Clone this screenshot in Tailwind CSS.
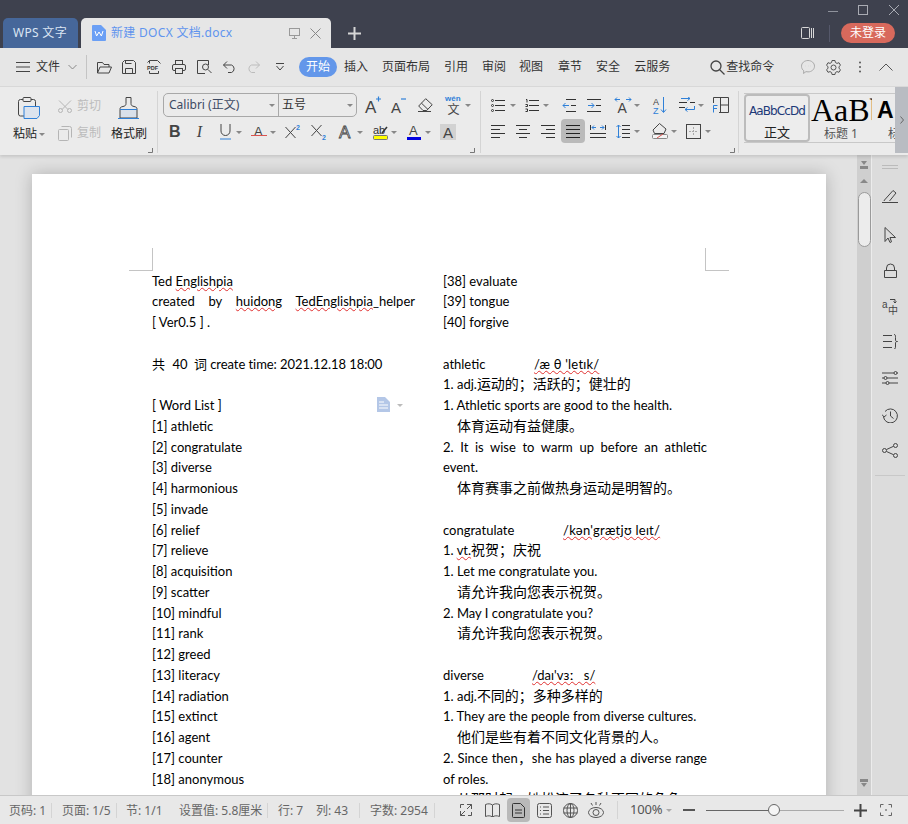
<!DOCTYPE html>
<html lang="zh">
<head>
<meta charset="utf-8">
<script src="https://cdn.jsdelivr.net/npm/@tailwindcss/browser@4"></script>
</head>
<body class="m-0">
<div class="w-[908px] h-[824px] overflow-hidden flex flex-col bg-[#e6e6e6] text-[#333] text-[12px] font-['Noto_Sans','Noto_Sans_CJK_SC',sans-serif]">

  <!-- title bar -->
  <header class="h-[48px] shrink-0 bg-[#3e414e] flex items-end relative">
    <div class="ml-[3px] w-[75px] h-[30px] bg-[#46679a] rounded-t-[5px] flex items-center pl-[10px] text-[#dbe5f3] text-[12px] tracking-[.3px]">WPS 文字</div>
    <div class="ml-[3px] w-[250px] h-[30px] bg-[#e6e6e6] rounded-t-[5px] flex items-center">
      <svg class="ml-[11px]" width="14" height="16" viewBox="0 0 14 16"><path d="M1 0h8l5 5v10a1 1 0 0 1-1 1H1a1 1 0 0 1-1-1V1a1 1 0 0 1 1-1z" fill="#6a9ff5"/><path d="M3 6l1.600 5L7 7l2.400 4L11 6" fill="none" stroke="#fff"/></svg>
      <span class="ml-[5px] w-[122px] text-[#5f94ee] whitespace-nowrap tracking-[.3px]">新建 DOCX 文档.docx</span>
      <svg class="ml-[56px]" width="11" height="11" viewBox="0 0 11 11" fill="none" stroke="#999"><rect x=".5" y=".5" width="10" height="7"/><path d="M5.500 8v2.500M3 10.500h5"/></svg>
      <svg class="ml-[10px]" width="11" height="11" viewBox="0 0 11 11" fill="none" stroke="#888"><path d="M.5.5l10 10M10.500.5l-10 10"/></svg>
    </div>
    <svg class="ml-[17px] mb-[8px]" width="13" height="13" viewBox="0 0 13 13" stroke="#d6d6d6" stroke-width="2"><path d="M6.500 0v13M0 6.500h13"/></svg>
    <div class="absolute right-[9px] top-[5px] flex items-center">
      <svg width="10" height="10" viewBox="0 0 10 10" fill="none" stroke="#8f929c"><path d="M0 6.500h10"/></svg>
      <svg class="ml-[20px]" width="10" height="10" viewBox="0 0 10 10" fill="none" stroke="#a9abb3"><rect x=".5" y=".5" width="9" height="9"/></svg>
      <svg class="ml-[21px]" width="10" height="10" viewBox="0 0 10 10" fill="none" stroke="#a9abb3"><path d="M0 0l10 10M10 0L0 10"/></svg>
    </div>
    <div class="absolute right-[13px] top-[23px] flex items-center">
      <svg width="13" height="12" viewBox="0 0 13 12" fill="none" stroke="#d8d8d8"><rect x=".5" y=".5" width="8" height="11" rx="1"/><path d="M10.500 1v10M12.500 1v10"/></svg>
      <span class="ml-[15px] w-px h-[17px] bg-[#55586a]"></span>
      <span class="ml-[11px] w-[54px] h-[20px] rounded-full bg-[#d8695c] text-white flex items-center justify-center text-[12px]">未登录</span>
    </div>
  </header>

  <!-- menu row -->
  <nav class="h-[39px] shrink-0 flex items-center border-b border-[#d9d9d9] bg-[#e6e6e6] text-[#333] whitespace-nowrap">
    <svg class="ml-[16px]" width="14" height="10" viewBox="0 0 14 10" stroke="#444"><path d="M0 .5h14M0 5h14M0 9.500h14"/></svg>
    <span class="ml-[6px]">文件</span>
    <svg class="ml-[8px]" width="9" height="6" viewBox="0 0 9 6" fill="none" stroke="#888"><path d="M.5 1l4 4 4-4"/></svg>
    <span class="ml-[9px] w-px h-[24px] bg-[#c4c4c4]"></span>
    <svg class="ml-[10px]" width="15" height="13" viewBox="0 0 15 13" fill="none" stroke="#444"><path d="M.5 12V1.500h5l1.500 2h5V6M.5 12l2.500-6h11.500L12 12z"/></svg>
    <svg class="ml-[10px]" width="14" height="14" viewBox="0 0 14 14" fill="none" stroke="#444"><path d="M.5 2.500l2-2h9l2 2v11H.5zM3.500 13.500V8.500h7v5M3.500.5v3h6"/></svg>
    <svg class="ml-[11px] overflow-visible" width="14" height="14" viewBox="0 0 14 14" fill="none" stroke="#444"><path d="M2.500 3.500V.5h8l3 3M2.500 11v2.500h9V11M2.500.5l-2 2"/><text x="0" y="9.500" font-size="5.500" font-weight="700" fill="#333" stroke="none" font-family="Liberation Sans">PDF</text></svg>
    <svg class="ml-[11px]" width="14" height="14" viewBox="0 0 14 14" fill="none" stroke="#444"><rect x="3.500" y=".5" width="7" height="4"/><rect x=".5" y="4.500" width="13" height="6" rx="1.500"/><rect x="3.500" y="8.500" width="7" height="5" fill="#e6e6e6"/></svg>
    <svg class="ml-[11px]" width="15" height="14" viewBox="0 0 15 14" fill="none" stroke="#444"><path d="M8 13.500H.5V.5h11V5"/><circle cx="8.500" cy="7" r="3"/><path d="M11 9.500l3.500 3.500"/></svg>
    <svg class="ml-[11px]" width="13" height="12" viewBox="0 0 13 12" fill="none" stroke="#444"><path d="M4 .5L.5 4 4 7.500M.5 4h8a4 4 0 0 1 0 7.500H5"/></svg>
    <svg class="ml-[11px]" width="13" height="12" viewBox="0 0 13 12" fill="none" stroke="#bcbcbc"><path d="M9 .5L12.500 4 9 7.500M12.500 4h-8a4 4 0 0 0 0 7.500H8"/></svg>
    <svg class="ml-[16px]" width="8" height="8" viewBox="0 0 8 8" fill="none" stroke="#444"><path d="M0 .5h8M.5 3l3.500 4 3.500-4"/></svg>
    <span class="ml-[15px] w-[38px] h-[20px] rounded-full bg-[#6397ea] text-white flex items-center justify-center">开始</span>
    <span class="ml-[7px]">插入</span><span class="ml-[14px]">页面布局</span><span class="ml-[14px]">引用</span><span class="ml-[14px]">审阅</span><span class="ml-[13px]">视图</span><span class="ml-[15px]">章节</span><span class="ml-[14px]">安全</span><span class="ml-[14px]">云服务</span>
    <svg class="ml-[40px]" width="15" height="15" viewBox="0 0 15 15" fill="none" stroke="#444" stroke-width="1.300"><circle cx="6" cy="6" r="5"/><path d="M9.500 9.500l5 5"/></svg>
    <span class="ml-[1px]">查找命令</span>
    <svg class="ml-[27px]" width="14" height="14" viewBox="0 0 14 14" fill="none" stroke="#aaa"><path d="M7 .5c3.600 0 6.500 2.500 6.500 5.700s-2.900 5.700-6.500 5.700c-.7 0-1.400-.1-2-.3L2.500 13.500l.3-2.700C1.400 9.800.5 8.100.5 6.200.5 3 3.400.5 7 .5z"/><path d="M4.500 6h.1M7 6h.1M9.500 6h.1" stroke-width="1.500"/></svg>
    <svg class="ml-[11px]" width="15" height="15" viewBox="0 0 15 15" fill="none" stroke="#555"><path d="M6 .5h3l.4 2 1.600.9 2-.7 1.500 2.600-1.500 1.300v1.800l1.500 1.300-1.500 2.600-2-.7-1.600.9-.4 2H6l-.4-2-1.600-.9-2 .7L.5 9.700 2 8.400V6.600L.5 5.300 2 2.700l2 .7 1.600-.9z"/><circle cx="7.500" cy="7.500" r="2.500"/></svg>
    <svg class="ml-[17px]" width="4" height="12" viewBox="0 0 4 12" fill="#555"><circle cx="2" cy="1.500" r="1"/><circle cx="2" cy="6" r="1"/><circle cx="2" cy="10.500" r="1"/></svg>
    <svg class="ml-[17px]" width="14" height="8" viewBox="0 0 14 8" fill="none" stroke="#555"><path d="M.5 7.500L7 1l6.500 6.500"/></svg>
  </nav>

  <!-- ribbon -->
  <section class="h-[68px] shrink-0 flex bg-[#ebebeb] relative shadow-[0_2px_3px_rgba(0,0,0,.12)] z-10">
    <!-- clipboard -->
    <div class="w-[157px] shrink-0 flex relative pt-[10px] whitespace-nowrap">
      <div class="ml-[13px] w-[30px] flex flex-col items-start">
        <svg class="ml-[5px]" width="22" height="22" viewBox="0 0 22 22" fill="none" stroke="#444"><path d="M5 2.500H2.500a2 2 0 0 0-2 2V17a2 2 0 0 0 2 2H6"/><path d="M13 2.500h2.500a2 2 0 0 1 2 2V9"/><rect x="5" y=".5" width="8" height="4" rx="1"/><path d="M6 9.500h15.500v9l-2.500 3H6z" fill="#dbe3ee" stroke="#2f80d8"/></svg>
        <div class="mt-[6px] flex items-center text-[#222]">粘贴<i class="ml-[2px] w-0 h-0 border-x-[3px] border-x-transparent border-t-[3px] border-t-[#888]"></i></div>
      </div>
      <div class="ml-[15px] w-[45px] flex flex-col text-[#bcbcbc]">
        <div class="flex items-center h-[18px]"><svg width="14" height="13" viewBox="0 0 14 13" fill="none" stroke="#b5b5b5"><path d="M1 .5l9 9M13 .5l-9 9"/><circle cx="2.500" cy="10.500" r="2"/><circle cx="11.500" cy="10.500" r="2"/></svg><span class="ml-[5px]">剪切</span></div>
        <div class="flex items-center h-[18px] mt-[9px]"><svg width="14" height="15" viewBox="0 0 14 15" fill="none" stroke="#b5b5b5"><rect x=".5" y="3.500" width="10" height="11" rx="1"/><path d="M3.500 .5h8a2 2 0 0 1 2 2v9"/></svg><span class="ml-[5px]">复制</span></div>
      </div>
      <div class="ml-[8px] w-[36px] flex flex-col items-start">
        <svg class="ml-[7px]" width="21" height="22" viewBox="0 0 21 22" fill="none" stroke="#444"><path d="M8 .5h5v6c0 2 1 2.500 3 3 2.500.5 3 1 3 3H2c0-2 .5-2.500 3-3 2-.5 3-1 3-3z"/><path d="M2 12.500h17v8.500H2z" fill="#d9e0ea"/><path d="M0 21.500h21M2 12.500h17" stroke="#2f80d8"/></svg>
        <div class="mt-[6px] text-[#222]">格式刷</div>
      </div>
      <svg class="absolute left-[148px] top-[61px]" width="5" height="5" viewBox="0 0 5 5" fill="none" stroke="#777"><path d="M4.500 0v4.500H0"/></svg>
    </div>
    <span class="w-px h-[62px] mt-[4px] bg-[#d4d4d4] shrink-0"></span>

    <!-- font -->
    <div class="w-[322px] shrink-0 flex flex-col relative">
      <div class="flex items-center mt-[6px] h-[24px]">
        <div class="ml-[5px] w-[194px] h-[24px] border border-[#a8a8a8] rounded-[5px] flex items-stretch">
          <div class="w-[115px] flex items-center pl-[5px] border-r border-[#a8a8a8] text-[#3d4a63]">Calibri (正文)<i class="ml-auto mr-[3px] w-0 h-0 border-x-[3px] border-x-transparent border-t-[3px] border-t-[#888]"></i></div>
          <div class="flex-1 flex items-center pl-[3px] text-[#333]">五号<i class="ml-auto mr-[3px] w-0 h-0 border-x-[3px] border-x-transparent border-t-[3px] border-t-[#888]"></i></div>
        </div>
        <svg class="ml-[8px] overflow-visible" width="16" height="18" viewBox="0 0 16 18"><text x="0" y="17" font-size="17" fill="#444" font-family="Liberation Sans">A</text><path d="M11 3h5M13.500.5v5" stroke="#2f80d8" stroke-width="1.200"/></svg>
        <svg class="ml-[10px] overflow-visible" width="15" height="18" viewBox="0 0 15 18"><text x="0" y="17" font-size="15" fill="#444" font-family="Liberation Sans">A</text><path d="M10 3h5" stroke="#2f80d8" stroke-width="1.200"/></svg>
        <svg class="ml-[12px]" width="15" height="14" viewBox="0 0 15 14" fill="none" stroke="#444"><path d="M5 12.500L.7 8l7-7.300 6.500 6L8.700 12.500zM3.500 5.200L10 11.500M0 13.500h13"/></svg>
        <svg class="ml-[12px] overflow-visible" width="17" height="20" viewBox="0 0 17 20"><text x="0" y="6" font-size="8" font-weight="700" fill="#2f80d8" font-family="Liberation Sans">wén</text><text x="2.500" y="19" font-size="12" fill="#444" font-family="Noto Sans CJK SC">文</text></svg>
        <i class="ml-[3px] w-0 h-0 border-x-[3px] border-x-transparent border-t-[3px] border-t-[#888]"></i>
      </div>
      <div class="flex items-center mt-[3px] h-[24px]">
        <span class="ml-[11px] w-[11px] text-[16px] font-bold text-[#444] leading-none font-['Liberation_Sans']">B</span>
        <span class="ml-[14px] w-[11px] text-[16px] italic text-[#444] leading-none font-['Liberation_Serif'] text-center">I</span>
        <svg class="ml-[14px]" width="13" height="16" viewBox="0 0 13 16" fill="none"><path d="M2 0v7a4.500 4.500 0 0 0 9 0V0" stroke="#444"/><path d="M1 15h11" stroke="#2f80d8"/></svg>
        <i class="ml-[4px] w-0 h-0 border-x-[3px] border-x-transparent border-t-[3px] border-t-[#888]"></i>
        <svg class="ml-[9px] overflow-visible" width="16" height="16" viewBox="0 0 16 16"><text x="3" y="12" font-size="13" fill="#444" font-family="Liberation Sans">A</text><path d="M0 11.500h16" stroke="#d9534f"/></svg>
        <i class="ml-[3px] w-0 h-0 border-x-[3px] border-x-transparent border-t-[3px] border-t-[#888]"></i>
        <svg class="ml-[9px] overflow-visible" width="16" height="16" viewBox="0 0 16 16"><path d="M.5 3l10 11M10.500 3L.5 14" stroke="#444" fill="none"/><text x="11" y="6" font-size="7" font-weight="700" fill="#2f80d8" font-family="Liberation Sans">2</text></svg>
        <svg class="ml-[10px] overflow-visible" width="16" height="16" viewBox="0 0 16 16"><path d="M.5 1l10 11M10.500 1L.5 12" stroke="#444" fill="none"/><text x="11" y="16" font-size="7" font-weight="700" fill="#2f80d8" font-family="Liberation Sans">2</text></svg>
        <svg class="ml-[12px] overflow-visible" width="15" height="16" viewBox="0 0 15 16"><text x="0" y="14" font-size="17" fill="none" stroke="#444" stroke-width=".8" font-family="Liberation Sans">A</text></svg>
        <i class="ml-[3px] w-0 h-0 border-x-[3px] border-x-transparent border-t-[3px] border-t-[#888]"></i>
        <svg class="ml-[10px] overflow-visible" width="15" height="17" viewBox="0 0 15 17"><text x="0" y="10" font-size="11" fill="#333" font-family="Liberation Sans">ab</text><path d="M9 9l5-6" stroke="#333" stroke-width="1.500"/><rect x=".5" y="11.500" width="14" height="4" rx="1" fill="#ffff00" stroke="#777"/></svg>
        <i class="ml-[3px] w-0 h-0 border-x-[3px] border-x-transparent border-t-[3px] border-t-[#888]"></i>
        <svg class="ml-[10px] overflow-visible" width="14" height="17" viewBox="0 0 14 17"><text x="2" y="11" font-size="13" fill="#444" font-family="Liberation Sans">A</text><rect x="0" y="13" width="14" height="3" fill="#0000e0"/></svg>
        <i class="ml-[4px] w-0 h-0 border-x-[3px] border-x-transparent border-t-[3px] border-t-[#888]"></i>
        <span class="ml-[9px] w-[16px] h-[16px] bg-[#d2d2d2] text-[#444] text-[15px] leading-none flex items-center justify-center font-['Liberation_Sans']">A</span>
      </div>
      <svg class="absolute left-[312px] top-[61px]" width="5" height="5" viewBox="0 0 5 5" fill="none" stroke="#777"><path d="M4.500 0v4.500H0"/></svg>
    </div>
    <span class="w-px h-[62px] mt-[4px] bg-[#d4d4d4] shrink-0"></span>

    <!-- paragraph -->
    <div class="w-[257px] shrink-0 flex flex-col relative">
      <div class="flex items-center mt-[7px] h-[22px]">
        <svg class="ml-[10px]" width="14" height="13" viewBox="0 0 14 13" fill="none" stroke="#333"><circle cx="1.500" cy="1.500" r="1"/><circle cx="1.500" cy="6.500" r="1"/><circle cx="1.500" cy="11.500" r="1"/><path d="M4 1.500h10M4 6.500h10M4 11.500h10"/></svg>
        <i class="ml-[5px] w-0 h-0 border-x-[3px] border-x-transparent border-t-[3px] border-t-[#888]"></i>
        <svg class="ml-[9px]" width="14" height="13" viewBox="0 0 14 13" fill="none" stroke="#333"><path d="M1 .5h1v3M.5 5.500h2v2h-2M.5 10h2v2.500h-2M4 1.500h10M4 6.500h10M4 11.500h10"/></svg>
        <i class="ml-[4px] w-0 h-0 border-x-[3px] border-x-transparent border-t-[3px] border-t-[#888]"></i>
        <svg class="ml-[13px]" width="14" height="13" viewBox="0 0 14 13" fill="none"><path d="M4 .5h10M9 6.500h5M4 12.500h10" stroke="#333"/><path d="M7 6.500H1M3.500 4L1 6.500 3.500 9" stroke="#2f80d8"/></svg>
        <svg class="ml-[11px]" width="14" height="13" viewBox="0 0 14 13" fill="none"><path d="M0 .5h14M9 6.500h5M0 12.500h14" stroke="#333"/><path d="M1 6.500h6M4.500 4L7 6.500 4.500 9" stroke="#2f80d8"/></svg>
        <svg class="ml-[13px] overflow-visible" width="18" height="17" viewBox="0 0 18 17"><text x="3.500" y="16" font-size="14" fill="#444" font-family="Liberation Sans">A</text><path d="M1 2.500h5M3 .5l-2 2 2 2M12 2.500h5M15 .5l2 2-2 2" fill="none" stroke="#2f80d8"/></svg>
        <i class="ml-[2px] w-0 h-0 border-x-[3px] border-x-transparent border-t-[3px] border-t-[#888]"></i>
        <svg class="ml-[13px] overflow-visible" width="14" height="17" viewBox="0 0 14 17"><text x="0" y="8" font-size="9" fill="#444" font-family="Liberation Sans">A</text><text x="0" y="17" font-size="9" fill="#2f80d8" font-family="Liberation Sans">Z</text><path d="M10.500 0v15M8 12.500l2.500 3 2.500-3" fill="none" stroke="#2f80d8"/></svg>
        <svg class="ml-[12px]" width="16" height="16" viewBox="0 0 16 16" fill="none"><path d="M0 5.500h8M11 5.500h5M0 10.500h6" stroke="#333"/><path d="M2 1.500h9M8.500-.5L11 1.500 8.500 3.500M15.500 9v3.500H6M8.500 10.500L6 12.500l2.500 2" stroke="#2f80d8"/></svg>
        <i class="ml-[3px] w-0 h-0 border-x-[3px] border-x-transparent border-t-[3px] border-t-[#888]"></i>
        <svg class="ml-[9px]" width="16" height="16" viewBox="0 0 16 16" fill="none"><path d="M.5 6V.5h15v15H6M7.500.5v15M7.500 8h8" stroke="#444"/><path d="M.5 15.500V8.500h4M.5 11.500h3.500" stroke="#2f80d8"/></svg>
      </div>
      <div class="flex items-center mt-[3px] h-[24px]">
        <svg class="ml-[10px]" width="14" height="13" viewBox="0 0 14 13" stroke="#333"><path d="M0 .5h14M0 4.500h9M0 8.500h14M0 12.500h9"/></svg>
        <svg class="ml-[11px]" width="14" height="13" viewBox="0 0 14 13" stroke="#333"><path d="M0 .5h14M3 4.500h8M0 8.500h14M3 12.500h8"/></svg>
        <svg class="ml-[11px]" width="14" height="13" viewBox="0 0 14 13" stroke="#333"><path d="M0 .5h14M5 4.500h9M0 8.500h14M5 12.500h9"/></svg>
        <span class="ml-[6px] w-[24px] h-[24px] rounded-[4px] bg-[#bababa] flex items-center justify-center"><svg width="14" height="13" viewBox="0 0 14 13" stroke="#222"><path d="M0 .5h14M0 4.500h14M0 8.500h14M0 12.500h14"/></svg></span>
        <svg class="ml-[5px]" width="16" height="14" viewBox="0 0 16 14" fill="none"><path d="M0 9.500h16M0 13.500h16M.5 1v5M15.500 1v5" stroke="#333"/><path d="M2 3.500h4M4 1.500l-2 2 2 2M10 3.500h4M12 1.500l2 2-2 2" stroke="#2f80d8"/></svg>
        <svg class="ml-[10px]" width="14" height="15" viewBox="0 0 14 15" fill="none"><path d="M6 1.500h8M6 5.500h8M6 9.500h8M6 13.500h8" stroke="#333"/><path d="M2.500 1v13M.5 3l2-2 2 2M.5 12l2 2 2-2" stroke="#2f80d8"/></svg>
        <i class="ml-[4px] w-0 h-0 border-x-[3px] border-x-transparent border-t-[3px] border-t-[#888]"></i>
        <svg class="ml-[12px]" width="16" height="16" viewBox="0 0 16 16" fill="none"><path d="M7.500.5L14 6l-2 4.500H2.500L1 7z" stroke="#444"/><rect x=".5" y="11.500" width="15" height="4" rx="1" stroke="#888" fill="#f4f4f4"/><path d="M5 15l6-4" stroke="#d9534f"/></svg>
        <i class="ml-[3px] w-0 h-0 border-x-[3px] border-x-transparent border-t-[3px] border-t-[#888]"></i>
        <svg class="ml-[9px]" width="15" height="15" viewBox="0 0 15 15" fill="none"><rect x=".5" y=".5" width="14" height="14" stroke="#444"/><path d="M7.500 3v9M3 7.500h9" stroke="#aaa" stroke-dasharray="2 1"/></svg>
        <i class="ml-[4px] w-0 h-0 border-x-[3px] border-x-transparent border-t-[3px] border-t-[#888]"></i>
      </div>
      <svg class="absolute left-[249px] top-[61px]" width="5" height="5" viewBox="0 0 5 5" fill="none" stroke="#777"><path d="M4.500 0v4.500H0"/></svg>
    </div>
    <span class="w-px h-[62px] mt-[4px] bg-[#d4d4d4] shrink-0"></span>

    <!-- styles -->
    <div class="ml-[5px] mt-[6px] w-[151px] h-[50px] flex border-y border-[#c8c8c8] overflow-hidden whitespace-nowrap">
      <div class="w-[62px] shrink-0 h-[44px] border-2 border-[#bcbcbc] box-content rounded-[4px] bg-[#ededed] flex flex-col items-center">
        <span class="mt-[7px] text-[#1d3a78] text-[12px] leading-[16px] font-['DejaVu_Sans'] tracking-[-.9px]">AaBbCcDd</span>
        <span class="mt-[4px] text-[13px] leading-[18px] text-[#222]">正文</span>
      </div>
      <div class="w-[62px] shrink-0 flex flex-col overflow-hidden pl-[1px]">
        <span class="text-[32px] leading-[32px] text-black font-['Liberation_Serif']">AaBb</span>
        <span class="ml-[13px] text-[12px] leading-[17px] text-[#555] -mt-[1px]">标题 1</span>
      </div>
      <div class="flex-1 flex flex-col overflow-hidden pl-[5px]">
        <span class="text-[23px] leading-[32px] font-bold text-black font-['Liberation_Sans']">A</span>
        <span class="ml-[11px] text-[12px] leading-[17px] text-[#555] -mt-[1px]">标</span>
      </div>
    </div>
    <div class="w-[13px] h-[66px] bg-[#b9bcc2] flex items-center justify-center">
      <svg width="4" height="8" viewBox="0 0 4 8" fill="none" stroke="#666"><path d="M.5.5l3 3.500-3 3.500"/></svg>
    </div>
  </section>

  <!-- main -->
  <main class="flex-1 min-h-0 flex overflow-hidden">
    <div class="w-[857px] shrink-0 bg-[#e2e2e2] overflow-hidden">
      <div class="relative ml-[32px] mt-[19px] w-[794px] h-[1123px] bg-white shadow-[0_0_16px_rgba(0,0,0,.22)] pl-[120px] pt-[96.5px] text-black text-[13px] leading-[20.75px] font-['Lato','Noto_Sans_CJK_SC',sans-serif]">
        <span class="absolute left-[97px] top-[96px] w-[24px] h-px bg-[#c4c4c4]"></span>
        <span class="absolute left-[120px] top-[74px] w-px h-[22px] bg-[#c4c4c4]"></span>
        <span class="absolute left-[673px] top-[96px] w-[24px] h-px bg-[#c4c4c4]"></span>
        <span class="absolute left-[673px] top-[74px] w-px h-[22px] bg-[#c4c4c4]"></span>
        <svg class="absolute left-[345px] top-[223px]" width="14" height="15" viewBox="0 0 14 15"><path d="M0 0h8l5 5v10H0z" fill="#b4c7e7"/><path d="M2 5h5M2 8h9M2 11h9" stroke="#fff"/></svg>
        <i class="absolute left-[365px] top-[230px] w-0 h-0 border-x-[3px] border-x-transparent border-t-[3px] border-t-[#bbb]"></i>
        <div class="flex w-[555px] gap-[28px]">
          <div class="w-[263px] shrink-0">
            <p>Ted <span class="underline decoration-wavy decoration-[#e03030] decoration-1">Englishpia</span></p>
            <p class="text-justify [text-align-last:justify]">created by <span class="underline decoration-wavy decoration-[#e03030] decoration-1">huidong</span> <span class="underline decoration-wavy decoration-[#e03030] decoration-1">TedEnglishpia</span>_helper</p>
            <p>[ Ver0.5 ] .</p>
            <p>&nbsp;</p>
            <p class="tracking-[-.06px]"><span class="mr-[1px]">共</span>&nbsp; 40&nbsp; 词 create time: 2021.12.18 18:00</p>
            <p>&nbsp;</p>
            <p>[ Word List ]</p>
            <p>[1] athletic</p>
            <p>[2] congratulate</p>
            <p>[3] diverse</p>
            <p>[4] harmonious</p>
            <p>[5] invade</p>
            <p>[6] relief</p>
            <p>[7] relieve</p>
            <p>[8] acquisition</p>
            <p>[9] scatter</p>
            <p>[10] mindful</p>
            <p>[11] rank</p>
            <p>[12] greed</p>
            <p>[13] literacy</p>
            <p>[14] radiation</p>
            <p>[15] extinct</p>
            <p>[16] agent</p>
            <p>[17] counter</p>
            <p>[18] anonymous</p>
          </div>
          <div class="w-[264px] shrink-0">
            <p>[38] evaluate</p>
            <p>[39] tongue</p>
            <p>[40] forgive</p>
            <p>&nbsp;</p>
            <p><span class="inline-block w-[91px]">athletic</span><span class="underline decoration-wavy decoration-[#e03030] decoration-1 tracking-[.2px]">/æ θ 'letɪk/</span></p>
            <p>1. adj.<span class="text-[14px]">运动的；活跃的；健壮的</span></p>
            <p>1. Athletic sports are good to the health.</p>
            <p class="pl-[14px] text-[14px]">体育运动有益健康。</p>
            <p class="text-justify [text-align-last:justify]">2. It is wise to warm up before an athletic</p>
            <p>event.</p>
            <p class="pl-[14px] text-[14px]">体育赛事之前做热身运动是明智的。</p>
            <p>&nbsp;</p>
            <p><span class="inline-block w-[120px]">congratulate</span><span class="underline decoration-wavy decoration-[#e03030] decoration-1 tracking-[.25px]">/kən'grætjʊ leɪt/</span></p>
            <p>1. <span class="underline decoration-wavy decoration-[#e03030] decoration-1">vt.</span><span class="text-[14px]">祝贺；庆祝</span></p>
            <p>1. Let me congratulate you.</p>
            <p class="pl-[14px] text-[14px]">请允许我向您表示祝贺。</p>
            <p>2. May I congratulate you?</p>
            <p class="pl-[14px] text-[14px]">请允许我向您表示祝贺。</p>
            <p>&nbsp;</p>
            <p><span class="inline-block w-[89px]">diverse</span><span class="underline decoration-wavy decoration-[#e03030] decoration-1">/daɪ'vɜː&nbsp;&nbsp; s/</span></p>
            <p>1. adj.<span class="text-[14px]">不同的；多种多样的</span></p>
            <p>1. They are the people from diverse cultures.</p>
            <p class="pl-[14px] text-[14px]">他们是些有着不同文化背景的人。</p>
            <p class="text-justify [text-align-last:justify]">2. Since then，she has played a diverse range</p>
            <p>of roles.</p>
            <p class="pl-[14px] text-[14px]">从那时起，她扮演了各种不同的角色。</p>
          </div>
        </div>
      </div>
    </div>
    <!-- scrollbar -->
    <div class="w-[14px] shrink-0 bg-[#cfcfcf] flex flex-col items-center">
      <svg class="mt-[6px]" width="8" height="9" viewBox="0 0 8 9" fill="#888"><path d="M1 0h6L4 4z"/><path d="M0 5h8v3H0z"/></svg>
      <i class="mt-[9px] w-0 h-0 border-x-[4px] border-x-transparent border-b-[4px] border-b-[#888]"></i>
      <div class="mt-[9px] w-[13px] h-[55px] rounded-[7px] bg-[#ececec] border border-[#9a9a9a]"></div>
      <svg class="mt-auto mb-[7px]" width="8" height="9" viewBox="0 0 8 9" fill="#888"><path d="M0 0h8v3H0z"/><path d="M1 4h6L4 8z"/></svg>
    </div>
    <!-- side panel -->
    <div class="w-[37px] shrink-0 bg-[#dcdcdc] border-l border-[#ececec] flex flex-col items-center">
      <svg class="mt-[10px]" width="16" height="4" viewBox="0 0 16 4" stroke="#bbb"><path d="M0 .5h16M0 3.500h16"/></svg>
      <svg class="mt-[20px]" width="16" height="14" viewBox="0 0 16 14" fill="none" stroke="#444"><path d="M0 13.500h16M2.500 11L11 1.500l3 2.500-6.500 8M2 12l.5-1"/></svg>
      <svg class="mt-[24px]" width="12" height="16" viewBox="0 0 12 16" fill="none" stroke="#444"><path d="M1 .5v14l3-3.500 2 4.500 1.500-.7L6 10.500h5.500z"/></svg>
      <svg class="mt-[20px]" width="13" height="15" viewBox="0 0 13 15" fill="none" stroke="#444"><path d="M.5 7.500h12v7H.5zM2.500 7.500V5a4 4 0 0 1 8 0v2.500"/></svg>
      <svg class="mt-[20px] overflow-visible" width="16" height="16" viewBox="0 0 16 16"><text x="0" y="10" font-size="10" fill="#444" font-family="Liberation Sans">a</text><text x="6" y="16" font-size="10" fill="#444" font-family="Noto Sans CJK SC">中</text><path d="M8 1.500h5v3M11.500 3.500l1.500 1.500 1.500-1.500" fill="none" stroke="#444"/></svg>
      <svg class="mt-[20px]" width="15" height="15" viewBox="0 0 15 15" fill="none" stroke="#444"><path d="M0 1.500h9M0 7.500h9M0 13.500h9M11 .5c1.500 0 1.500 1 1.500 3v2.500c0 1 .5 1.500 2 1.500-1.500 0-2 .5-2 1.500V12c0 2 0 3-1.500 3"/></svg>
      <svg class="mt-[22px]" width="16" height="14" viewBox="0 0 16 14" fill="none" stroke="#444"><path d="M0 2h12M15 2h1M0 7h2M5 7h11M0 12h4M7 12h9"/><circle cx="13.500" cy="2" r="1.500"/><circle cx="3.500" cy="7" r="1.500"/><circle cx="5.500" cy="12" r="1.500"/></svg>
      <svg class="mt-[23px]" width="16" height="15" viewBox="0 0 16 15" fill="none" stroke="#444"><path d="M1.500 9A7 7 0 1 0 3 3.500M0 6.500l2 2.500 2.500-2M8.500 3.500v4.500l3 2.500"/></svg>
      <svg class="mt-[20px]" width="16" height="15" viewBox="0 0 16 15" fill="none" stroke="#444"><circle cx="2.500" cy="7.500" r="2"/><circle cx="13.500" cy="2.500" r="2"/><circle cx="13.500" cy="12.500" r="2"/><path d="M4.500 6.500l7-3.200M4.500 8.500l7 3.200"/></svg>
      <span class="mt-[17px] w-[30px] h-px bg-[#c8c8c8]"></span>
    </div>
  </main>

  <!-- status bar -->
  <footer class="h-[29px] shrink-0 bg-[#e8e8e8] border-t border-[#c8c8c8] flex items-center text-[#666] text-[12px] whitespace-nowrap">
    <span class="w-[52px] pl-[9px] h-[15px] leading-[15px] border-r border-[#d4d4d4]">页码: 1</span>
    <span class="w-[65px] pl-[10px] h-[15px] leading-[15px] border-r border-[#d4d4d4]">页面: 1/5</span>
    <span class="w-[62px] pl-[9px] leading-[15px]">节: 1/1</span>
    <span class="w-[89px] leading-[15px] h-[15px] border-r border-[#d4d4d4]">设置值: 5.8厘米</span>
    <span class="w-[48px] pl-[10px] leading-[15px]">行: 7</span>
    <span class="w-[44px] leading-[15px] h-[15px] border-r border-[#d4d4d4]">列: 43</span>
    <span class="w-[75px] pl-[10px] leading-[15px] h-[15px] border-r border-[#d4d4d4]">字数: 2954</span>
    <svg class="ml-[25px]" width="12" height="12" viewBox="0 0 12 12" fill="none" stroke="#555"><path d="M7 .5h4.500V5M11.500.5L7 5M5 11.500H.5V7M.5 11.500L5 7M.5 4V.5H4M11.500 8v3.500H8"/></svg>
    <svg class="ml-[13px]" width="15" height="14" viewBox="0 0 15 14" fill="none" stroke="#555"><path d="M.5 1.500C3 .5 5.500.5 7.500 2c2-1.500 4.500-1.500 7-.5v12c-2.500-1-5-1-7 .5-2-1.500-4.500-1.500-7-.5zM7.500 2v12"/></svg>
    <span class="ml-[7px] w-[23px] h-[24px] rounded-[4px] bg-[#b9b9b9] flex items-center justify-center"><svg width="13" height="15" viewBox="0 0 13 15" fill="none" stroke="#333"><path d="M.5 1.500a1 1 0 0 1 1-1h7l4 4v9a1 1 0 0 1-1 1h-10a1 1 0 0 1-1-1zM3 7h7M3 10h7"/></svg></span>
    <svg class="ml-[7px]" width="15" height="15" viewBox="0 0 15 15" fill="none" stroke="#555"><rect x=".5" y=".5" width="14" height="14" rx="2"/><path d="M3 4h1M6 4h6M3 7.500h1M6 7.500h6M3 11h1M6 11h6"/></svg>
    <svg class="ml-[11px]" width="15" height="15" viewBox="0 0 15 15" fill="none" stroke="#555"><circle cx="7.500" cy="7.500" r="7"/><ellipse cx="7.500" cy="7.500" rx="3.500" ry="7"/><path d="M.5 5h14M.5 10h14M7.500.5v14"/></svg>
    <svg class="ml-[10px]" width="16" height="16" viewBox="0 0 16 16" fill="none" stroke="#555"><ellipse cx="8" cy="10.500" rx="7.500" ry="5"/><circle cx="8" cy="10.500" r="3"/><path d="M8 0v3M3 1l1.500 2.500M13 1l-1.500 2.500"/></svg>
    <span class="ml-[13px] w-px h-[18px] bg-[#d4d4d4]"></span>
    <span class="ml-[12px] text-[13px] text-[#555] w-[32px] tracking-[-.2px]">100%</span>
    <i class="ml-[4px] w-0 h-0 border-x-[3px] border-x-transparent border-t-[3px] border-t-[#aaa]"></i>
    <span class="ml-[11px] w-[12px] h-[2px] bg-[#555]"></span>
    <div class="ml-[11px] w-[138px] h-[12px] flex items-center">
      <span class="w-[62px] h-px bg-[#666]"></span>
      <span class="w-[12px] h-[12px] rounded-full border border-[#666] bg-[#f5f5f5]"></span>
      <span class="flex-1 h-px bg-[#aaa]"></span>
    </div>
    <svg class="ml-[10px]" width="13" height="13" viewBox="0 0 13 13" stroke="#444" stroke-width="2"><path d="M6.500 0v13M0 6.500h13"/></svg>
    <svg class="ml-[13px]" width="12" height="12" viewBox="0 0 12 12" fill="none" stroke="#666"><path d="M.5 3.500V.5h3M8.500.5h3v3M11.500 8.500v3h-3M3.500 11.500h-3v-3"/><circle cx="6" cy="6" r=".5"/></svg>
  </footer>
</div>
</body>
</html>
